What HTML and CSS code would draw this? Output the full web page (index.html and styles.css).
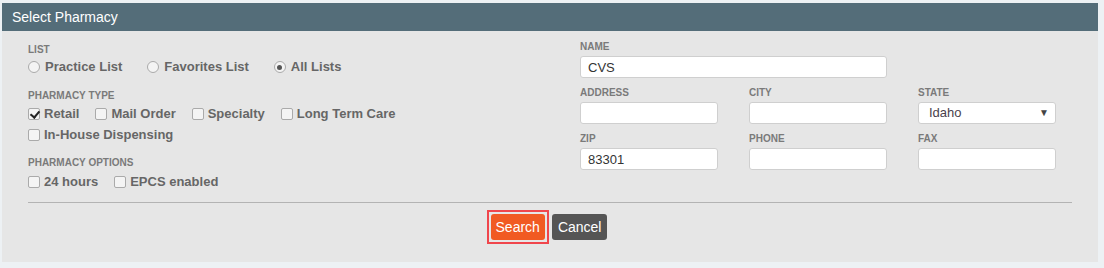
FILE: index.html
```html
<!DOCTYPE html>
<html lang="en">

<head>
    <meta charset="UTF-8" />
    <title>Select Pharmacy</title>
    <link rel="stylesheet" href="styles.css">
</head>

<body>
    <div class="panel">
        <div class="panel-head">Select Pharmacy</div>
        <div class="panel-body">
            <div class="cols">
                <div class="left">
                    <div class="label">LIST</div>
                    <div class="opts list">
                        <label class="opt"><span class="radio"></span>Practice List</label>
                        <label class="opt"><span class="radio"></span>Favorites List</label>
                        <label class="opt"><span class="radio on"></span>All Lists</label>
                    </div>

                    <div class="label type">PHARMACY TYPE</div>
                    <div class="opts types">
                        <label class="opt"><span class="check on"></span>Retail</label>
                        <label class="opt"><span class="check"></span>Mail Order</label>
                        <label class="opt"><span class="check"></span>Specialty</label>
                        <label class="opt"><span class="check"></span>Long Term Care</label>
                    </div>
                    <div class="opts row2">
                        <label class="opt"><span class="check"></span>In-House Dispensing</label>
                    </div>

                    <div class="label options">PHARMACY OPTIONS</div>
                    <div class="opts extras">
                        <label class="opt"><span class="check"></span>24 hours</label>
                        <label class="opt"><span class="check"></span>EPCS enabled</label>
                    </div>
                </div>

                <div class="right">
                    <div class="grid">
                        <div class="field wide">
                            <div class="label">NAME</div>
                            <input class="inp" type="text" value="CVS">
                        </div>
                        <div class="field first">
                            <div class="label">ADDRESS</div>
                            <input class="inp" type="text">
                        </div>
                        <div class="field">
                            <div class="label">CITY</div>
                            <input class="inp" type="text">
                        </div>
                        <div class="field">
                            <div class="label">STATE</div>
                            <div class="sel">Idaho<span class="arrow">&#9660;</span></div>
                        </div>
                        <div class="field">
                            <div class="label">ZIP</div>
                            <input class="inp" type="text" value="83301">
                        </div>
                        <div class="field">
                            <div class="label">PHONE</div>
                            <input class="inp" type="text">
                        </div>
                        <div class="field">
                            <div class="label">FAX</div>
                            <input class="inp" type="text">
                        </div>
                    </div>
                </div>
            </div>

            <hr class="divider">

            <div class="actions">
                <span class="focus"><button class="btn search">Search</button></span>
                <button class="btn cancel">Cancel</button>
            </div>
        </div>
    </div>
</body>

</html>
```

FILE: styles.css
```css
* {
    margin: 0;
    padding: 0;
    box-sizing: border-box;
}

body {
    background: #edf1f4;
    font-family: 'Liberation Sans', Arial, sans-serif;
    padding: 3px 6px 6px 2px;
}

.panel {
    background: #e6e6e6;
    height: 259px;
}

.panel-head {
    background: #546d79;
    color: #fff;
    font-size: 14px;
    height: 28px;
    line-height: 28px;
    padding-left: 10px;
}

.panel-body {
    padding: 10px 26px 0 26px;
}

.cols {
    display: flex;
}

.left {
    width: 552px;
}

.right {
    flex: 1;
}

.label {
    font-size: 10px;
    font-weight: bold;
    color: #7a7a7a;
    line-height: 12px;
    height: 12px;
}

.left .label {
    margin-top: 3px;
}

.left .label.type {
    margin-top: 15px;
}

.left .label.options {
    margin-top: 14px;
}

.opts {
    display: flex;
    gap: 16px;
    margin-top: 3px;
}

.opts.list {
    gap: 25px;
}

.opts.types {
    margin-top: 4px;
}

.opts.row2,
.opts.extras {
    margin-top: 5px;
}

.opt {
    display: flex;
    align-items: center;
    font-size: 13px;
    font-weight: bold;
    color: #666;
    line-height: 16px;
    white-space: nowrap;
}

.radio {
    width: 12px;
    height: 12px;
    border: 1px solid #aaa;
    border-radius: 50%;
    background: #f4f4f4;
    margin-right: 5px;
    display: flex;
    align-items: center;
    justify-content: center;
}

.radio.on::after {
    content: "";
    width: 5px;
    height: 5px;
    border-radius: 50%;
    background: #555;
}

.check {
    width: 12px;
    height: 12px;
    border: 1px solid #aaa;
    border-radius: 2px;
    background: #f4f4f4;
    margin-right: 4px;
    position: relative;
}

.check.on::after {
    content: "";
    position: absolute;
    left: 3px;
    top: 0;
    width: 4px;
    height: 7px;
    border: solid #222;
    border-width: 0 2px 2px 0;
    transform: rotate(40deg);
}

.grid {
    display: grid;
    grid-template-columns: repeat(3, 138px);
    column-gap: 31px;
    row-gap: 9px;
}

.field.wide {
    grid-column: 1 / span 2;
}

.field.first {
    grid-column: 1;
}

.field .label {
    margin-bottom: 3px;
}

.inp,
.sel {
    display: block;
    width: 100%;
    height: 22px;
    border: 1px solid #cfcfcf;
    border-radius: 3px;
    background: #fff;
    font-family: 'Liberation Sans', Arial, sans-serif;
    font-size: 13px;
    color: #333;
    padding: 0 7px;
    outline: none;
}

.sel {
    position: relative;
    line-height: 20px;
    color: #4a3f4c;
    padding-left: 10px;
}

.arrow {
    position: absolute;
    right: 6px;
    top: 0;
    font-size: 10px;
    color: #444;
}

.divider {
    border: none;
    border-top: 1px solid #b3b3b3;
    margin-top: 12px;
    width: 1044px;
}

.actions {
    display: flex;
    justify-content: center;
    align-items: center;
    gap: 3px;
    margin-top: 7px;
    padding-right: 6px;
}

.focus {
    border: 2px solid #f0464c;
    padding: 2px;
    display: flex;
}

.btn {
    font-family: 'Liberation Sans', Arial, sans-serif;
    font-size: 14px;
    color: #fff;
    border: none;
    border-radius: 3px;
    height: 26px;
    padding: 0 5px;
    cursor: pointer;
}

.search {
    background: #f15a22;
}

.cancel {
    background: #555;
    padding: 0 6px;
}
```
